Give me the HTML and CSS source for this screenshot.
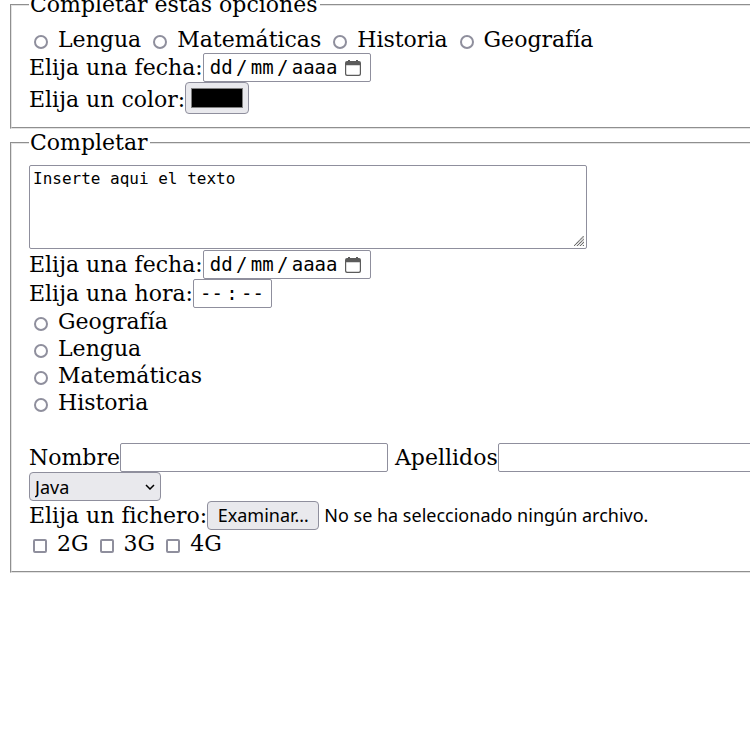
FILE: index.html
```html
<!DOCTYPE html>
<html lang="es">
<head>
<meta charset="utf-8">
<title>Formulario</title>
<link rel="stylesheet" href="styles.css">
</head>
<body>
<form>
  <fieldset>
    <legend>Completar estas opciones</legend>
    <div class="row">
      <label class="option"><input type="radio" name="materia">Lengua</label>
      <label class="option"><input type="radio" name="materia">Matemáticas</label>
      <label class="option"><input type="radio" name="materia">Historia</label>
      <label class="option"><input type="radio" name="materia">Geografía</label>
    </div>
    <div class="row">
      <label for="dia1">Elija una fecha:</label>
      <span class="field segments">
        <input id="dia1" class="two" type="text" value="dd" aria-label="Día"><span>/</span><input class="two" type="text" value="mm" aria-label="Mes"><span>/</span><input class="four" type="text" value="aaaa" aria-label="Año">
        <button class="picker" type="button" aria-label="Abrir calendario"><svg viewBox="0 0 16 16" width="16" height="16"><path fill="#5b5b5b" fill-rule="evenodd" d="M3 0h2v1h6V0h2v1h1a2 2 0 0 1 2 2v11a2 2 0 0 1-2 2H2a2 2 0 0 1-2-2V3a2 2 0 0 1 2-2h1zM1.200 5.300v8.300q0 1.200 1.200 1.200h11.200q1.200 0 1.200-1.200V5.300z"/></svg></button>
      </span>
    </div>
    <div class="row row-end">
      <label for="color">Elija un color:</label>
      <input id="color" type="color" value="#000000">
    </div>
  </fieldset>

  <fieldset>
    <legend>Completar</legend>
    <div class="row message">
      <textarea class="field" aria-label="Texto">Inserte aqui el texto</textarea>
      <svg class="grip" viewBox="0 0 10 10" width="10" height="10"><path d="M0 10 10 0M3 10 10 3M6 10 10 6M9 10 10 9" stroke="#666" stroke-width="1.200" stroke-dasharray="1.200 .3" fill="none"/></svg>
    </div>
    <div class="row">
      <label for="dia2">Elija una fecha:</label>
      <span class="field segments">
        <input id="dia2" class="two" type="text" value="dd" aria-label="Día"><span>/</span><input class="two" type="text" value="mm" aria-label="Mes"><span>/</span><input class="four" type="text" value="aaaa" aria-label="Año">
        <button class="picker" type="button" aria-label="Abrir calendario"><svg viewBox="0 0 16 16" width="16" height="16"><path fill="#5b5b5b" fill-rule="evenodd" d="M3 0h2v1h6V0h2v1h1a2 2 0 0 1 2 2v11a2 2 0 0 1-2 2H2a2 2 0 0 1-2-2V3a2 2 0 0 1 2-2h1zM1.200 5.300v8.300q0 1.200 1.200 1.200h11.200q1.200 0 1.200-1.200V5.300z"/></svg></button>
      </span>
    </div>
    <div class="row">
      <label for="hora">Elija una hora:</label>
      <span class="field segments">
        <input id="hora" class="two" type="text" value="--" aria-label="Hora"><span>:</span><input class="two" type="text" value="--" aria-label="Minutos">
      </span>
    </div>
    <div class="stack">
      <label class="option"><input type="radio" name="asignatura">Geografía</label>
      <label class="option"><input type="radio" name="asignatura">Lengua</label>
      <label class="option"><input type="radio" name="asignatura">Matemáticas</label>
      <label class="option"><input type="radio" name="asignatura">Historia</label>
    </div>
    <div class="row names">
      <label>Nombre<input class="field name" type="text"></label>
      <label>Apellidos<input class="field name" type="text"></label>
    </div>
    <div class="row">
      <span class="select">
        <select aria-label="Lenguaje"><option>Java</option></select>
        <svg class="chevron" viewBox="0 0 10 6" width="10" height="6"><path d="M1 1l4 4 4-4" fill="none" stroke="#000" stroke-width="1.500"/></svg>
      </span>
    </div>
    <div class="row">
      <label for="fichero">Elija un fichero:</label>
      <span class="file">
        <span class="browse">Examinar…</span>
        <span>No se ha seleccionado ningún archivo.</span>
        <input id="fichero" type="file">
      </span>
    </div>
    <div class="row">
      <label class="option"><input type="checkbox">2G</label>
      <label class="option"><input type="checkbox">3G</label>
      <label class="option"><input type="checkbox">4G</label>
    </div>
  </fieldset>
</form>
</body>
</html>
```
FILE: styles.css
```css
* {
  box-sizing: border-box;
}

body {
  margin: -9px 0 0;
  padding: 0 10px 10px;
  overflow-x: hidden;
  background: #fff;
  color: #000;
  font: 22px/27px "DejaVu Serif", serif;
}

form {
  width: max-content;
  min-width: 100%;
}

fieldset {
  margin: 0;
  padding: 8px 17px 14px;
  border: 2px groove #e3e3e3;
  white-space: nowrap;
}

legend {
  padding: 0 2px 0 1px;
}

input,
select,
textarea,
button {
  margin: 0;
  color: inherit;
}

.row {
  display: flex;
  align-items: center;
}

.row-end {
  align-items: flex-end;
}

.option,
.names label {
  display: flex;
  align-items: center;
}

.row .option + .option {
  margin-left: 7px;
}

.names {
  gap: 7px;
  margin-top: 27px;
}

input[type="radio"],
input[type="checkbox"] {
  appearance: none;
  width: 14px;
  height: 14px;
  margin: 5px 10px 0 5px;
  border: 2px solid #8f8f9d;
  border-radius: 50%;
  background: #fff;
}

input[type="checkbox"] {
  margin-left: 4px;
  border-radius: 2px;
}

input[type="radio"]:checked,
input[type="checkbox"]:checked {
  background: #0060df;
}

.field {
  border: 1px solid #8f8f9d;
  border-radius: 2px;
  background: #fff;
}

.segments {
  display: flex;
  align-items: center;
  height: 29px;
  padding: 0 7px 0 6px;
  font: 19px/27px "DejaVu Sans Mono", monospace;
}

.segments input {
  padding: 0;
  border: 0;
  background: none;
  font: inherit;
}

.segments span {
  width: 18px;
  text-align: center;
}

.two {
  width: 23px;
}

.four {
  width: 46px;
}

.picker {
  display: flex;
  margin: 0 2px 0 7px;
  padding: 0;
  border: 0;
  background: none;
}

input[type="color"] {
  appearance: none;
  width: 64px;
  height: 32px;
  margin-bottom: -1px;
  padding: 5px;
  border: 1px solid #8f8f9d;
  border-radius: 4px;
  background: #e9e9ed;
}

input[type="color"]::-webkit-color-swatch-wrapper {
  padding: 0;
}

input[type="color"]::-webkit-color-swatch {
  border: 1px solid #808080;
  border-radius: 0;
}

.message {
  position: relative;
  width: 558px;
  padding: 1px 0;
}

textarea {
  width: 100%;
  height: 84px;
  padding: 3px;
  resize: none;
  font: 16px/19px "DejaVu Sans Mono", monospace;
}

.grip {
  position: absolute;
  right: 3px;
  bottom: 4px;
}

.name {
  width: 268px;
  height: 29px;
  padding: 0 4px;
  font: 18px "Noto Sans", sans-serif;
}

.select {
  position: relative;
}

select {
  display: block;
  appearance: none;
  width: 132px;
  height: 29px;
  padding: 0 5px;
  border: 1px solid #8f8f9d;
  border-radius: 4px;
  background: #e9e9ed;
  font: 18px "Noto Sans", sans-serif;
}

.chevron {
  position: absolute;
  top: 12px;
  right: 6px;
  pointer-events: none;
}

.file {
  position: relative;
  display: flex;
  align-items: center;
  gap: 5px;
  font: 18px/27px "Noto Sans", sans-serif;
}

.browse {
  min-width: 112px;
  padding: 0 5px;
  border: 1px solid #8f8f9d;
  border-radius: 4px;
  background: #e9e9ed;
  text-align: center;
}

.file input {
  position: absolute;
  inset: 0;
  width: 100%;
  opacity: 0;
}
```
